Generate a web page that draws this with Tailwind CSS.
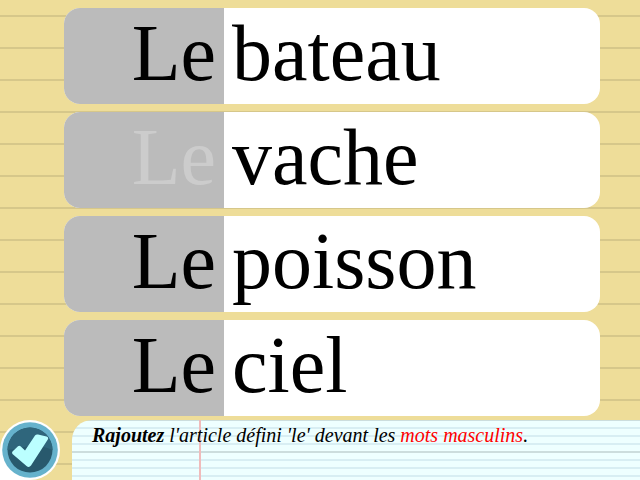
<!DOCTYPE html>
<html lang="fr">
<head>
<meta charset="utf-8">
<meta name="viewport" content="width=device-width, initial-scale=1">
<title>Le : articles définis</title>
<script src="https://cdn.jsdelivr.net/npm/@tailwindcss/browser@4"></script>
</head>
<body class="flex h-screen flex-col overflow-hidden bg-[#eedd99] bg-[linear-gradient(transparent_15px,#d6c78a_15px,#d6c78a_17px,transparent_17px)] bg-[length:100%_32px] font-['Liberation_Serif',serif] text-black [text-rendering:optimizeSpeed]">
<main class="flex flex-1 flex-col gap-2 pt-2 pr-10 pb-1 pl-16 text-[80px] leading-[90px]">
  <div class="flex h-24 overflow-hidden rounded-2xl bg-white">
    <button type="button" aria-pressed="true" class="w-40 bg-[#bbbbbb] pr-2 pb-1.5 text-right">Le</button>
    <span class="flex-1 pl-2">bateau</span>
  </div>
  <div class="flex h-24 overflow-hidden rounded-2xl bg-white">
    <button type="button" aria-pressed="false" class="w-40 bg-[#bbbbbb] pr-2 pb-1.5 text-right text-[#cccccc]">Le</button>
    <span class="flex-1 pl-2">vache</span>
  </div>
  <div class="flex h-24 overflow-hidden rounded-2xl bg-white">
    <button type="button" aria-pressed="true" class="w-40 bg-[#bbbbbb] pr-2 pb-1.5 text-right">Le</button>
    <span class="flex-1 pl-2">poisson</span>
  </div>
  <div class="flex h-24 overflow-hidden rounded-2xl bg-white">
    <button type="button" aria-pressed="true" class="w-40 bg-[#bbbbbb] pr-2 pb-1.5 text-right">Le</button>
    <span class="flex-1 pl-2">ciel</span>
  </div>
</main>
<footer class="flex h-[60px] gap-3">
  <button type="button" aria-label="Valider" class="size-[60px] rounded-full rounded-bl-none bg-white">
    <svg viewBox="0 0 60 60" class="size-full" aria-hidden="true">
      <circle cx="30" cy="30" r="27.8" fill="#66b2cc"/>
      <circle cx="30" cy="30" r="22.5" fill="#28596d"/>
      <path d="M7.500 30a22.500 22.500 0 0 1 45 0q-14 -6 -24 -4q-12 3 -21 4z" fill="#2f667c"/>
      <path d="M12.500 31.500L18 26.200q1.300-1 2.500 0L25 30.500 35 15.500q1.200-1.500 3-1l8.500 2q2.500 1 1.300 3L31 45.500q-2 2.500-4.500.5L12.500 34q-1-1.200 0-2.500z" fill="#bbffff"/>
    </svg>
  </button>
  <p class="flex-1 rounded-tl-[20px] bg-[#eeffff] bg-[linear-gradient(90deg,transparent_127px,#f0bbbb_127px,#f0bbbb_129px,transparent_129px),linear-gradient(#ccdddd_1px,transparent_1px,transparent_31px,#ccdddd_31px),linear-gradient(#d8eef3_1px,transparent_1px,transparent_7px,#d8eef3_7px)] bg-[length:100%_100%,100%_32px,100%_8px] pl-5 pt-1 text-[20px] leading-[22px] italic"><b>Rajoutez</b> l'article défini 'le' devant les <span class="text-[#ff0000]">mots masculins</span>.</p>
</footer>
</body>
</html>
